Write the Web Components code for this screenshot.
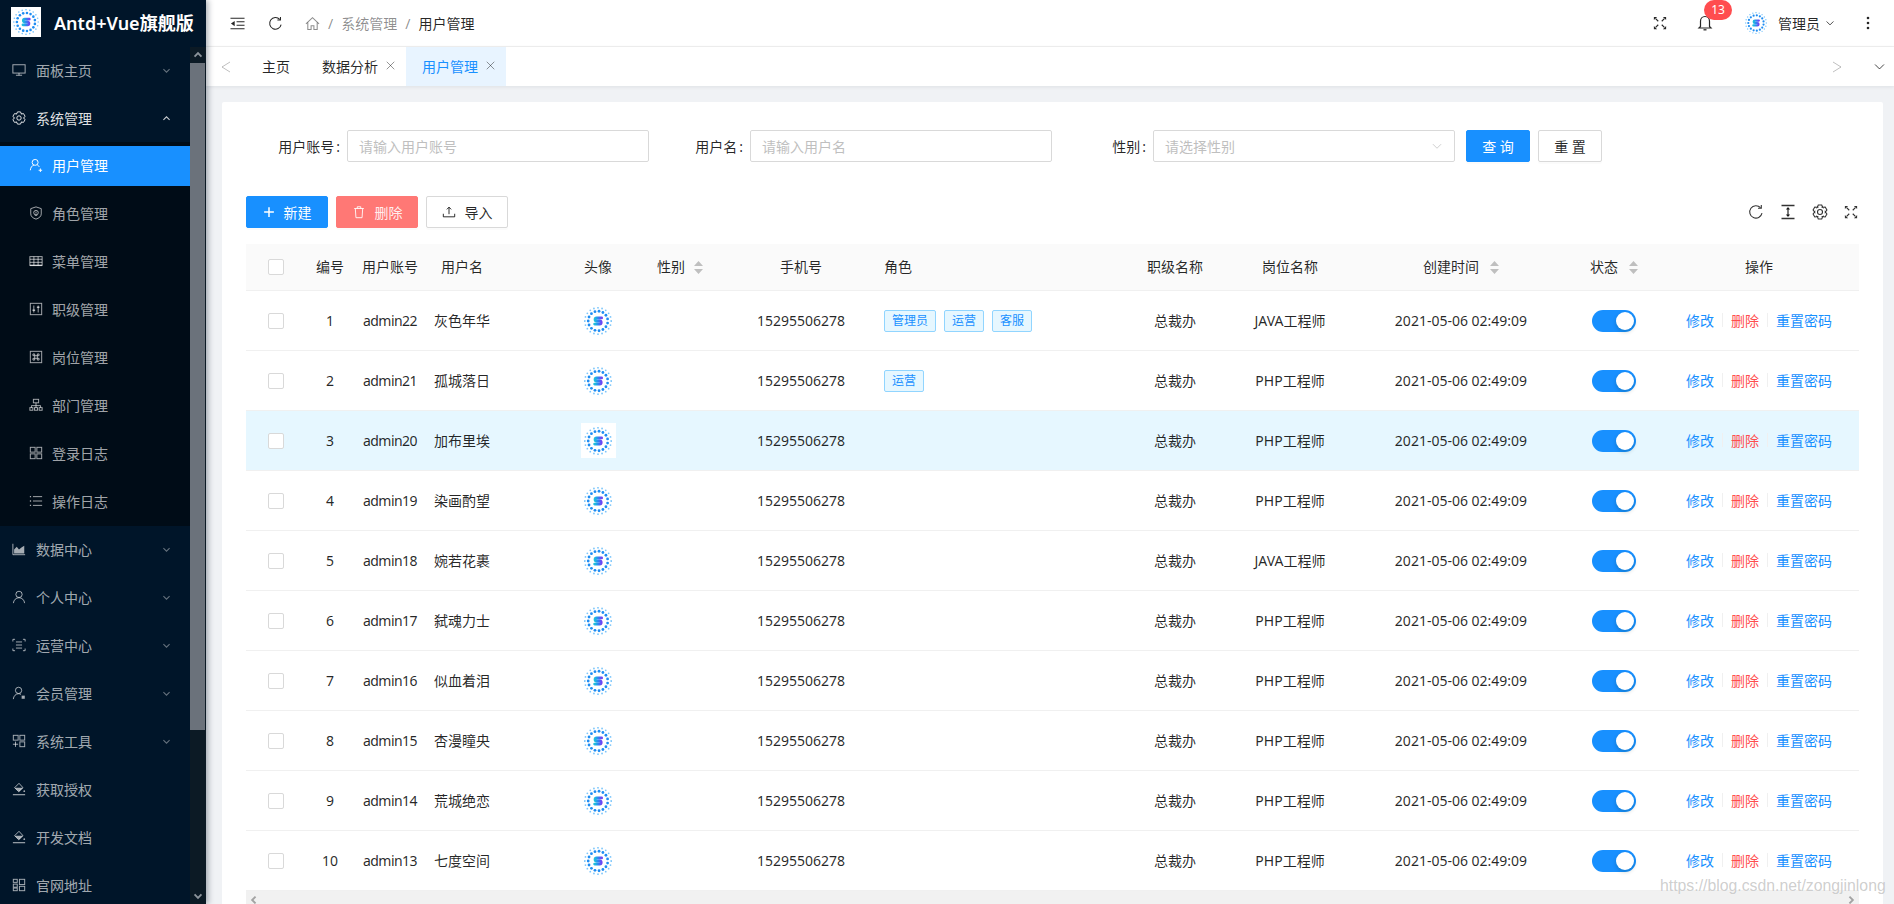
<!DOCTYPE html>
<html lang="zh">
<head>
<meta charset="utf-8">
<title>用户管理</title>
<style>
  html, body { margin: 0; height: 100%; overflow: hidden; }
  body {
    display: flex;
    font-family: "Noto Sans", "Noto Sans CJK SC", sans-serif;
    font-size: 14px;
    color: rgba(0,0,0,.85);
    background: #f0f2f5;
  }
  .watermark {
    position: absolute;
    left: 1660px;
    top: 877px;
    font: 15.8px "Liberation Sans", sans-serif;
    color: rgba(130,130,130,.4);
    text-shadow: 0 0 1px #fff;
    white-space: nowrap;
    pointer-events: none;
  }
</style>
</head>
<body>
<side-bar>
  <menu-item icon="monitor" arrow="down">面板主页</menu-item>
  <menu-item icon="setting" arrow="up" open>系统管理</menu-item>
  <sub-menu>
    <menu-item icon="usersub" sub active>用户管理</menu-item>
    <menu-item icon="shield" sub>角色管理</menu-item>
    <menu-item icon="table" sub>菜单管理</menu-item>
    <menu-item icon="sliders" sub>职级管理</menu-item>
    <menu-item icon="command" sub>岗位管理</menu-item>
    <menu-item icon="cluster" sub>部门管理</menu-item>
    <menu-item icon="appstore" sub>登录日志</menu-item>
    <menu-item icon="bars" sub>操作日志</menu-item>
  </sub-menu>
  <menu-item icon="area" arrow="down">数据中心</menu-item>
  <menu-item icon="user" arrow="down">个人中心</menu-item>
  <menu-item icon="scan" arrow="down">运营中心</menu-item>
  <menu-item icon="member" arrow="down">会员管理</menu-item>
  <menu-item icon="appadd" arrow="down">系统工具</menu-item>
  <menu-item icon="bucket">获取授权</menu-item>
  <menu-item icon="bucket">开发文档</menu-item>
  <menu-item icon="group">官网地址</menu-item>
</side-bar>
<main-panel>
  <top-header></top-header>
  <tab-strip></tab-strip>
  <content-card>
    <search-form></search-form>
    <table-toolbar></table-toolbar>
    <user-table></user-table>
  </content-card>
</main-panel>
<div class="watermark">https://blog.csdn.net/zongjinlong</div>

<script>
// gear outline with six teeth, on the 16 unit icon grid
function gearPath() {
  let d = '';
  for (let i = 0; i < 6; i++) {
    const a = i * Math.PI / 3 - Math.PI / 2;
    const pts = [[5.3, -0.55], [7.2, -0.24], [7.2, 0.24], [5.3, 0.55]];
    pts.forEach(([r, o], j) => {
      const x = 8 + r * Math.cos(a + o);
      const y = 8 + r * Math.sin(a + o);
      d += (i === 0 && j === 0 ? 'M' : 'L') + x.toFixed(2) + ' ' + y.toFixed(2);
    });
  }
  return d + 'Z';
}

const ICONS = {
  monitor: '<rect x="1" y="2" width="14" height="9.5"/><path d="M8 11.5V14M4.5 14h7"/>',
  setting: `<path d="${gearPath()}"/><circle cx="8" cy="8" r="2.5"/>`,
  usersub: '<circle cx="7" cy="5" r="3.4"/><path d="M1.5 14c.3-3.2 2-5.4 4-5.8M9.4 7.8c1 .5 1.8 1.300 2.300 2.300M11 14h4M13 12v4" />',
  shield: '<path d="M8 1l6 2v6c0 3-2.600 5-6 6-3.400-1-6-3-6-6V3z"/><circle cx="8" cy="7.600" r="2.600"/><path d="M8 6.400v2.200M6.600 10.600h2.800"/>',
  table: '<rect x="1" y="3" width="14" height="10"/><path d="M1 6h14M1 9.500h14M5.600 3v10M10.400 3v10" /><path d="M1 13h14" stroke-width="1.600"/>',
  sliders: '<rect x="1.500" y="1.500" width="13" height="13"/><path d="M5.500 4v8M10.500 4v8"/><path d="M4 9.500h3M9 6h3" stroke-width="1.600"/>',
  command: '<rect x="1.500" y="1.500" width="13" height="13"/><path d="M6.500 6.500h3v3h-3zM6.500 6.500h-2v-2h2zM9.500 6.500v-2h2v2zM6.500 9.500v2h-2v-2zM9.500 9.500h2v2h-2z"/>',
  cluster: '<rect x="5" y="1.500" width="6" height="4"/><path d="M8 5.500v3.200M2.800 11V8.700h10.400V11M8 8.700V11"/><rect x="1" y="11" width="3.400" height="3"/><rect x="6.300" y="11" width="3.400" height="3"/><rect x="11.600" y="11" width="3.400" height="3"/>',
  appstore: '<rect x="1.500" y="1.500" width="5.500" height="5.500"/><rect x="9" y="1.500" width="5.500" height="5.500"/><rect x="1.500" y="9" width="5.500" height="5.500"/><rect x="9" y="9" width="5.500" height="5.500"/>',
  bars: '<path d="M4.500 3h10.500M4.500 8h10.500M4.500 13h10.500"/><path d="M1 3h1.400M1 8h1.400M1 13h1.400" stroke-width="1.600"/>',
  area: '<path d="M1 2v12.500h14" /><path fill="currentColor" stroke="none" d="M2.400 13V8.600l3-3.100 2.600 3 3.200-2.600L14 4.200V13z"/>',
  user: '<circle cx="8" cy="5" r="3.600"/><path d="M1.600 15c.3-3.600 3-6.200 6.400-6.200s6.100 2.600 6.400 6.200"/>',
  scan: '<path d="M1 4V1.500h2.500M12.500 1.500H15V4M15 12v2.500h-2.500M3.500 14.500H1V12"/><path d="M4.500 4.500h7M4.500 8h7M4.500 11.500h7"/>',
  member: '<circle cx="7.500" cy="5" r="3.600"/><path d="M1.500 15c.3-3.600 2.800-6.200 6-6.200 1 0 2 .3 2.800.8"/><rect x="11" y="11" width="3.600" height="3.600" fill="currentColor" stroke="none"/>',
  appadd: '<rect x="1.500" y="1.500" width="5.500" height="5.500"/><rect x="9" y="1.500" width="5.500" height="5.500"/><rect x="9" y="9" width="5.500" height="5.500"/><path d="M1 11.700h6M4 8.700v6"/>',
  bucket: '<path d="M8 1.500l-5 5 4.600 4.600 5-4.600z"/><path d="M3 6.500h9.600L8 11.100z" fill="currentColor" stroke="none"/><path d="M1 14.500h14" stroke-width="1.300"/><circle cx="14" cy="10.500" r="1" fill="currentColor" stroke="none"/>',
  group: '<rect x="1.500" y="1.500" width="4.500" height="3.500"/><rect x="1.500" y="7" width="4.500" height="3.500"/><rect x="1.500" y="11.500" width="4.500" height="3"/><rect x="8.500" y="1.500" width="6" height="6"/><rect x="8.500" y="9.500" width="6" height="5"/>',
  indent: '<path d="M.5 2.500h15M7 6.200h8.500M7 9.800h8.500M.5 13.500h15"/><path fill="currentColor" stroke="none" d="M1 8l4-2.800v5.600z"/>',
  reload: '<path d="M14 9.200A6.200 6.200 0 1 1 12.500 3.700"/><path d="M13.300 1v3.300H10"/>',
  home: '<path d="M1 8.500L8 1.800l7 6.700"/><path d="M3 6.800V14.500h3.500V10.500h3v4H13V6.800"/>',
  expand: '<path d="M3 3l3 3M13 3l-3 3M3 13l3-3M13 13l-3-3" stroke-width="1.300"/><path fill="currentColor" stroke="none" d="M1 1h3.700L1 4.700zM15 1v3.700L11.300 1zM1 15v-3.700L4.700 15zM15 15h-3.700L15 11.300z"/>',
  bell: '<path d="M8 1.500C5.300 1.500 3.500 3.500 3.500 6.200V11.500L2 13h12l-1.500-1.500V6.200C12.500 3.500 10.700 1.500 8 1.500z"/><path d="M6.500 14.800h3" stroke-width="1.300"/>',
  down: '<path d="M2.500 5.500L8 11l5.500-5.500"/>',
  up: '<path d="M2.500 10.500L8 5l5.500 5.500"/>',
  left: '<path d="M10.500 2.500L5 8l5.500 5.500"/>',
  right: '<path d="M5.500 2.500L11 8l-5.500 5.500"/>',
  tleft: '<path d="M12 3L4 8l8 5"/>',
  tright: '<path d="M4 3l8 5-8 5"/>',
  close: '<path d="M2.500 2.500l11 11M13.500 2.500l-11 11"/>',
  plus: '<path d="M8 1.500v13M1.500 8h13" stroke-width="2"/>',
  trash: '<path d="M2.500 4h11M6 4V2h4v2M3.800 4l.7 10.500h7L12.200 4"/>',
  upload: '<path d="M8 10.500V2.500M5.500 5L8 2.500 10.500 5M1.500 10v3.500h13V10"/>',
  colheight: '<path d="M1.500 1.500h13M1.500 14.500h13M8 4v8" stroke-width="1.300"/><path fill="currentColor" stroke="none" d="M8 3l2.200 2.500H5.800zM8 13l-2.200-2.500h4.400z"/>'
};

class AntIcon extends HTMLElement {
  connectedCallback() {
    const size = this.getAttribute('size') || 14;
    const sw = this.getAttribute('weight') || 1.1;
    const name = this.getAttribute('name');
    this.attachShadow({ mode: 'open' });
    this.shadowRoot.innerHTML = `
      <style>:host { display: inline-flex; flex: none; width: ${size}px; height: ${size}px; } svg { display: block; }</style>
      <svg width="${size}" height="${size}" viewBox="0 0 16 16" fill="none" stroke="currentColor" stroke-width="${sw}">${ICONS[name]}</svg>`;
  }
}

// round dotted logo used for the brand and the avatars
class LogoMark extends HTMLElement {
  connectedCallback() {
    const size = this.getAttribute('size') || 28;
    let dots = '';
    const ring = (n, r, s, c, off) => {
      for (let i = 0; i < n; i++) {
        const a = (i + off) * 2 * Math.PI / n;
        dots += `<circle cx="${(50 + r * Math.cos(a)).toFixed(1)}" cy="${(50 + r * Math.sin(a)).toFixed(1)}" r="${s}" fill="${c}"/>`;
      }
    };
    ring(20, 47, 3.2, '#7cc6fb', 0);
    ring(15, 35, 5, '#1f8df2', .5);
    this.attachShadow({ mode: 'open' });
    this.shadowRoot.innerHTML = `
      <style>:host { display: inline-flex; flex: none; width: ${size}px; height: ${size}px; } svg { display: block; }</style>
      <svg width="${size}" height="${size}" viewBox="0 0 100 100">
        <defs><linearGradient id="g" x1="0" x2="1" y1="0" y2="0">
          <stop offset="0" stop-color="#1cc0dc"/><stop offset=".5" stop-color="#2f86f2"/><stop offset="1" stop-color="#7444f2"/>
        </linearGradient></defs>
        ${dots}
        <path d="M63 39H45a5.500 5.500 0 0 0 0 11H56a5.500 5.500 0 0 1 0 11H38" fill="none" stroke="url(#g)" stroke-width="10" stroke-linecap="round"/>
      </svg>`;
  }
}

class MenuItem extends HTMLElement {
  connectedCallback() {
    const sub = this.hasAttribute('sub');
    const active = this.hasAttribute('active');
    const open = this.hasAttribute('open');
    const arrow = this.getAttribute('arrow');
    const color = active ? '#fff' : open ? 'rgba(255,255,255,.88)' : 'rgba(255,255,255,.65)';
    this.attachShadow({ mode: 'open' });
    this.shadowRoot.innerHTML = `
      <style>
        :host { display: flex; align-items: center; height: 40px; margin-bottom: 8px; box-sizing: border-box; padding-bottom: 2px;
          padding-left: ${sub ? 29 : 12}px; color: ${color}; background: ${active ? '#1890ff' : 'transparent'}; white-space: nowrap; }
        ant-icon { margin-right: ${sub ? 9 : 10}px; }
        .arrow { margin-left: auto; color: ${open ? 'rgba(255,255,255,.8)' : 'rgba(255,255,255,.4)'}; }
      </style>
      <ant-icon name="${this.getAttribute('icon')}" size="14"></ant-icon>
      <slot></slot>
      ${arrow ? `<ant-icon class="arrow" name="${arrow}" size="9" weight="1.8" style="margin-right:19px"></ant-icon>` : ''}`;
  }
}

class SubMenu extends HTMLElement {
  connectedCallback() {
    this.attachShadow({ mode: 'open' });
    this.shadowRoot.innerHTML = `
      <style>
        :host { display: block; background: #000c17; padding: 4px 0; margin: -5px 0 4px; }
        ::slotted(menu-item:last-child) { margin-bottom: 0; }
      </style>
      <slot></slot>`;
  }
}

class SideBar extends HTMLElement {
  connectedCallback() {
    this.attachShadow({ mode: 'open' });
    this.shadowRoot.innerHTML = `
      <style>
        :host { display: flex; flex-direction: column; flex: none; width: 206px; height: 100vh; background: #001529;
          box-shadow: 2px 0 6px rgba(0,21,41,.35); position: relative; z-index: 2; font-size: 14px; }
        .brand { display: flex; align-items: center; height: 47px; box-sizing: border-box; padding: 0 0 3px 11px; flex: none; color: #fff; font-size: 18px; font-weight: 600; white-space: nowrap; }
        .box { width: 30px; height: 30px; background: #fff; display: flex; align-items: center; justify-content: center; margin-right: 13px; }
        .body { display: flex; flex: 1; min-height: 0; }
        .menu { width: 190px; flex: none; padding-top: 4px; overflow: hidden; }
        .bar { flex: 1; display: flex; flex-direction: column; background: #0c1a25; color: #8d949b; }
        .btn { height: 16px; flex: none; display: flex; align-items: center; justify-content: center; }
        .thumb { height: 667px; background: #6b727b; flex: none; margin-right: 1px; }
        .rest { flex: 1; }
      </style>
      <div class="brand"><div class="box"><logo-mark size="26"></logo-mark></div>Antd+Vue旗舰版</div>
      <div class="body">
        <div class="menu"><slot></slot></div>
        <div class="bar">
          <div class="btn"><ant-icon name="up" size="10" weight="3"></ant-icon></div>
          <div class="thumb"></div>
          <div class="rest"></div>
          <div class="btn"><ant-icon name="down" size="10" weight="3"></ant-icon></div>
        </div>
      </div>`;
  }
}

class MainPanel extends HTMLElement {
  connectedCallback() {
    this.attachShadow({ mode: 'open' });
    this.shadowRoot.innerHTML = `
      <style>:host { display: flex; flex-direction: column; flex: 1; min-width: 0; height: 100vh; }</style>
      <slot></slot>`;
  }
}

class TopHeader extends HTMLElement {
  connectedCallback() {
    this.attachShadow({ mode: 'open' });
    this.shadowRoot.innerHTML = `
      <style>
        :host { display: flex; align-items: center; flex: none; height: 47px; box-sizing: border-box; background: #fff;
          border-bottom: 1px solid #f0f0f0; padding: 0 24px; color: rgba(0,0,0,.85); white-space: nowrap; }
        .crumbs { display: flex; align-items: center; margin-left: 22px; color: rgba(0,0,0,.45); }
        .crumbs i { font-style: normal; margin: 0 8px; }
        .crumbs b { font-weight: 400; }
        .crumbs .cur { color: rgba(0,0,0,.85); }
        .crumbs ant-icon { color: rgba(0,0,0,.45); }
        .right { margin-left: auto; display: flex; align-items: center; }
        .bell { position: relative; margin-left: 30px; width: 16px; height: 16px; }
        .badge { position: absolute; left: 7px; top: -15px; min-width: 28px; height: 20px; box-sizing: border-box; border-radius: 10px;
          background: #ff4d4f; color: #fff; font-size: 12px; line-height: 20px; text-align: center; }
        .user { margin-left: 32px; display: flex; align-items: center; }
        .user span { margin: 0 5px 0 11px; }
        .dots { margin-left: 31px; }
      </style>
      <ant-icon name="indent" size="15"></ant-icon>
      <ant-icon name="reload" size="15" style="margin-left:23px"></ant-icon>
      <div class="crumbs">
        <ant-icon name="home" size="15"></ant-icon><i>/</i><b>系统管理</b><i>/</i><b class="cur">用户管理</b>
      </div>
      <div class="right">
        <ant-icon name="expand" size="14"></ant-icon>
        <div class="bell"><ant-icon name="bell" size="16" weight="1.2"></ant-icon><div class="badge">13</div></div>
        <div class="user"><logo-mark size="22"></logo-mark><span>管理员</span><ant-icon name="down" size="10" weight="1.3"></ant-icon></div>
        <svg class="dots" width="4" height="14" viewBox="0 0 4 14" fill="currentColor"><circle cx="2" cy="2" r="1.3"/><circle cx="2" cy="7" r="1.3"/><circle cx="2" cy="12" r="1.3"/></svg>
      </div>`;
  }
}

class TabStrip extends HTMLElement {
  connectedCallback() {
    this.attachShadow({ mode: 'open' });
    this.shadowRoot.innerHTML = `
      <style>
        :host { display: flex; align-items: center; flex: none; height: 39px; background: #fff; box-shadow: 0 1px 4px rgba(0,21,41,.08); position: relative; z-index: 1; white-space: nowrap; }
        .nav { display: flex; align-items: center; justify-content: center; width: 40px; height: 100%; color: rgba(0,0,0,.25); flex: none; }
        .tab { display: flex; align-items: center; height: 100%; padding: 0 10px 2px 16px; box-sizing: border-box; }
        .tab.plain { padding-right: 16px; }
        .tab ant-icon { margin-left: 7px; color: rgba(0,0,0,.5); }
        .tab.on { background: #e8f4ff; color: #1890ff; }
        .fill { flex: 1; }
        .more { color: rgba(0,0,0,.75); width: 30px; margin-left: 7px; }
      </style>
      <div class="nav"><ant-icon name="tleft" size="16" weight="1"></ant-icon></div>
      <div class="tab plain">主页</div>
      <div class="tab">数据分析<ant-icon name="close" size="11" weight="1.2"></ant-icon></div>
      <div class="tab on">用户管理<ant-icon name="close" size="11" weight="1.2"></ant-icon></div>
      <div class="fill"></div>
      <div class="nav"><ant-icon name="tright" size="16" weight="1"></ant-icon></div>
      <div class="nav more"><ant-icon name="down" size="13" weight="1.2"></ant-icon></div>`;
  }
}

class ContentCard extends HTMLElement {
  connectedCallback() {
    this.attachShadow({ mode: 'open' });
    this.shadowRoot.innerHTML = `
      <style>
        :host { display: flex; flex-direction: column; flex: 1; min-height: 0; overflow: hidden; background: #fff; border-radius: 2px 2px 0 0;
          margin: 16px 11px 0 16px; padding: 28px 24px 0; }
      </style>
      <slot></slot>`;
  }
}

class SearchForm extends HTMLElement {
  connectedCallback() {
    const field = (label, ph, chevron) => `
      <label class="field"><span>${label}<i>:</i></span>
        <div class="input">${ph}${chevron ? '<ant-icon name="down" size="12" weight="1"></ant-icon>' : ''}</div>
      </label>`;
    this.attachShadow({ mode: 'open' });
    this.shadowRoot.innerHTML = `
      <style>
        :host { display: flex; align-items: center; flex: none; height: 32px; margin-bottom: 34px; white-space: nowrap; }
        .field { display: flex; align-items: center; width: 403px; }
        .field span { width: 94px; margin-right: 7px; text-align: right; color: rgba(0,0,0,.85); }
        .field i { font-style: normal; margin-left: 2px; }
        .input { display: flex; align-items: center; justify-content: space-between; width: 302px; height: 32px; box-sizing: border-box;
          border: 1px solid #d9d9d9; border-radius: 2px; padding: 0 11px; color: #bfbfbf; }
        .btn { width: 64px; height: 32px; box-sizing: border-box; border: 1px solid #d9d9d9; border-radius: 2px; display: flex; align-items: center; justify-content: center;
          margin-left: 8px; box-shadow: 0 2px 0 rgba(0,0,0,.015); }
        .btn.primary { background: #1890ff; border-color: #1890ff; color: #fff; margin-left: 11px; }
      </style>
      ${field('用户账号', '请输入用户账号')}
      ${field('用户名', '请输入用户名')}
      ${field('性别', '请选择性别', true)}
      <div class="btn primary">查 询</div>
      <div class="btn">重 置</div>`;
  }
}

class TableToolbar extends HTMLElement {
  connectedCallback() {
    this.attachShadow({ mode: 'open' });
    this.shadowRoot.innerHTML = `
      <style>
        :host { display: flex; align-items: center; flex: none; height: 32px; margin-bottom: 16px; white-space: nowrap; }
        .btn { width: 82px; height: 32px; box-sizing: border-box; border: 1px solid #d9d9d9; border-radius: 2px; display: flex; align-items: center; justify-content: center;
          margin-right: 8px; box-shadow: 0 2px 0 rgba(0,0,0,.015); }
        .btn ant-icon { margin-right: 9px; }
        .blue { background: #1890ff; border-color: #1890ff; color: #fff; }
        .red { background: #ff7875; border-color: #ff7875; color: rgba(255,255,255,.9); }
        .tools { margin-left: auto; display: flex; align-items: center; gap: 16px; margin-right: 1px; color: rgba(0,0,0,.8); }
      </style>
      <div class="btn blue"><ant-icon name="plus" size="12"></ant-icon>新建</div>
      <div class="btn red"><ant-icon name="trash" size="14"></ant-icon>删除</div>
      <div class="btn"><ant-icon name="upload" size="14"></ant-icon>导入</div>
      <div class="tools">
        <ant-icon name="reload" size="16"></ant-icon>
        <ant-icon name="colheight" size="16"></ant-icon>
        <ant-icon name="setting" size="16"></ant-icon>
        <ant-icon name="expand" size="14"></ant-icon>
      </div>`;
  }
}

class StatusSwitch extends HTMLElement {
  connectedCallback() {
    this.attachShadow({ mode: 'open' });
    this.shadowRoot.innerHTML = `
      <style>
        :host { display: inline-block; vertical-align: middle; width: 44px; height: 22px; border-radius: 11px; background: #1890ff; position: relative; }
        i { position: absolute; top: 2px; right: 2px; width: 18px; height: 18px; border-radius: 50%; background: #fff; box-shadow: 0 2px 4px rgba(0,35,11,.2); }
      </style>
      <i></i>`;
  }
}

const USERS = [
  ['admin22', '灰色年华', 'JAVA', ['管理员', '运营', '客服']],
  ['admin21', '孤城落日', 'PHP', ['运营']],
  ['admin20', '加布里埃', 'PHP', []],
  ['admin19', '染画酌望', 'PHP', []],
  ['admin18', '婉若花裹', 'JAVA', []],
  ['admin17', '弑魂力士', 'PHP', []],
  ['admin16', '似血着泪', 'PHP', []],
  ['admin15', '杏漫瞳央', 'PHP', []],
  ['admin14', '荒城绝恋', 'PHP', []],
  ['admin13', '七度空间', 'PHP', []]
];

class UserTable extends HTMLElement {
  connectedCallback() {
    const sort = '<svg class="sort" width="9" height="13" viewBox="0 0 9 13" fill="#bfbfbf"><path d="M4.500 0L9 5H0zM4.500 13L0 8h9z"/></svg>';
    const rows = USERS.map((u, i) => `
      <tr class="${i === 2 ? 'hl' : ''}">
        <td><span class="cb"></span></td>
        <td>${i + 1}</td>
        <td class="acc">${u[0]}</td>
        <td class="name cjk">${u[1]}</td>
        <td><span class="avatar"><logo-mark size="28"></logo-mark></span></td>
        <td></td>
        <td>15295506278</td>
        <td class="roles">${u[3].map(t => `<span class="tag">${t}</span>`).join('')}</td>
        <td class="cjk">总裁办</td>
        <td class="cjk">${u[2]}工程师</td>
        <td>2021-05-06 02:49:09</td>
        <td><status-switch></status-switch></td>
        <td class="ops cjk"><div class="acts"><a>修改</a><s></s><a class="del">删除</a><s></s><a>重置密码</a></div></td>
      </tr>`).join('');
    this.attachShadow({ mode: 'open' });
    this.shadowRoot.innerHTML = `
      <style>
        :host { display: block; flex: none; }
        table { width: 1613px; table-layout: fixed; border-collapse: separate; border-spacing: 0; }
        th, td { padding: 0; text-align: center; border-bottom: 1px solid #f0f0f0; box-sizing: border-box; white-space: nowrap; }
        th { height: 47px; background: #fafafa; font-weight: 400; color: rgba(0,0,0,.85); padding-bottom: 2px; }
        th:first-child { padding-bottom: 0; }
        td { height: 60px; }
        td.cjk { padding-bottom: 2px; }
        td.acc { letter-spacing: -.55px; }
        tr.hl td { background: #e6f7ff; }
        .cb { display: block; margin: 0 auto; width: 16px; height: 16px; box-sizing: border-box; border: 1px solid #d9d9d9; border-radius: 2px; background: #fff; }
        .name { padding-right: 57px; }
        .avatar { display: flex; align-items: center; justify-content: center; margin: 0 auto; width: 35px; height: 35px; background: #fff; }
        .left { text-align: left; }
        .sort { vertical-align: -2px; margin-left: 11px; }
        .sex { padding-left: 16px; }
        .sex .sort { margin-left: 9px; }
        .roles, .rolehead { text-align: left; padding-left: 27px; }
        .tag { display: inline-block; height: 22px; line-height: 20px; box-sizing: border-box; padding: 0 7px; margin-right: 8px; font-size: 12px;
          color: #1890ff; background: #e6f7ff; border: 1px solid #91d5ff; border-radius: 2px; vertical-align: middle; }
        .ops, .opshead { padding-right: 12px; }
        .acts { display: flex; align-items: center; justify-content: center; }
        a { color: #1890ff; }
        a.del { color: #ff4d4f; }
        s { width: 1px; height: 14px; background: #f0f0f0; margin: 0 8px; }
        .hscroll { height: 17px; background: #f1f1f1; display: flex; justify-content: space-between; align-items: center; padding: 0 3px; color: #a3a3a3; }
      </style>
      <table>
        <colgroup>
          <col style="width:60px"><col style="width:48px"><col style="width:72px"><col style="width:129px"><col style="width:86px">
          <col style="width:104px"><col style="width:112px"><col style="width:278px"><col style="width:80px"><col style="width:150px">
          <col style="width:192px"><col style="width:114px"><col style="width:188px">
        </colgroup>
        <thead><tr>
          <th><span class="cb"></span></th>
          <th>编号</th>
          <th>用户账号</th>
          <th class="name">用户名</th>
          <th>头像</th>
          <th class="left sex">性别${sort}</th>
          <th>手机号</th>
          <th class="rolehead">角色</th>
          <th>职级名称</th>
          <th>岗位名称</th>
          <th>创建时间${sort}</th>
          <th>状态${sort}</th>
          <th class="opshead">操作</th>
        </tr></thead>
        <tbody>${rows}</tbody>
      </table>
      <div class="hscroll"><ant-icon name="left" size="10" weight="3"></ant-icon><ant-icon name="right" size="10" weight="3"></ant-icon></div>`;
  }
}

customElements.define('ant-icon', AntIcon);
customElements.define('logo-mark', LogoMark);
customElements.define('menu-item', MenuItem);
customElements.define('sub-menu', SubMenu);
customElements.define('side-bar', SideBar);
customElements.define('main-panel', MainPanel);
customElements.define('top-header', TopHeader);
customElements.define('tab-strip', TabStrip);
customElements.define('content-card', ContentCard);
customElements.define('search-form', SearchForm);
customElements.define('table-toolbar', TableToolbar);
customElements.define('status-switch', StatusSwitch);
customElements.define('user-table', UserTable);
</script>
</body>
</html>
